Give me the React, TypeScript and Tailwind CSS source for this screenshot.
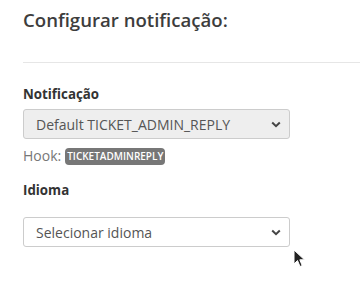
import React from "react";

function Chevron() {
  return (
    <svg width="10" height="7" viewBox="0 0 10 7" className="text-[#444]">
      <path d="M1.2 1.5 L5 5.2 L8.8 1.5" fill="none" stroke="currentColor" strokeWidth="2" />
    </svg>
  );
}

function Cursor() {
  return (
    <svg width="14" height="20" viewBox="0 0 14 20" className="absolute left-[293px] top-[249px]">
      <path d="M1 1 L1 15 L4.5 11.5 L7 17.5 L9.2 16.6 L6.8 10.8 L11.5 10.8 Z" fill="#222" stroke="#fff" strokeWidth="1" />
    </svg>
  );
}

export default function App() {
  return (
    <main className="relative w-[360px] h-[306px] bg-white font-['Open_Sans',sans-serif] text-[#333] overflow-hidden">
      <div className="pl-[23px] pt-[7px]">
        <h2 className="text-[18.6px] font-semibold text-[#3d3d3d] leading-[25px]">Configurar notificação:</h2>
        <hr className="mt-[30px] border-t border-[#e6e6e6]" />
        <div className="pt-[22px] w-[267px]">
          <label className="block text-[13.3px] font-bold leading-[18px] text-[#333]">Notificação</label>
          <div className="mt-[6px] h-[30px] flex items-center justify-between border border-[#ccc] rounded-[3px] bg-[#eee] pl-[12px] pr-[8px] text-[14px] text-[#555]">
            <span>Default TICKET_ADMIN_REPLY</span>
            <Chevron />
          </div>
          <div className="mt-[8px] flex items-center gap-[4px] text-[14px] text-[#777] leading-[18px]">
            <span>Hook:</span>
            <span className="bg-[#777] text-white text-[10px] font-semibold rounded-[4px] px-[2px] leading-[17px]">TICKETADMINREPLY</span>
          </div>
          <label className="mt-[16px] block text-[13.3px] font-bold leading-[18px] text-[#333]">Idioma</label>
          <div className="mt-[18px] h-[30px] flex items-center justify-between border border-[#ccc] rounded-[3px] bg-white pl-[12px] pr-[8px] text-[14px] text-[#555]">
            <span>Selecionar idioma</span>
            <Chevron />
          </div>
        </div>
      </div>
      <Cursor />
    </main>
  );
}
